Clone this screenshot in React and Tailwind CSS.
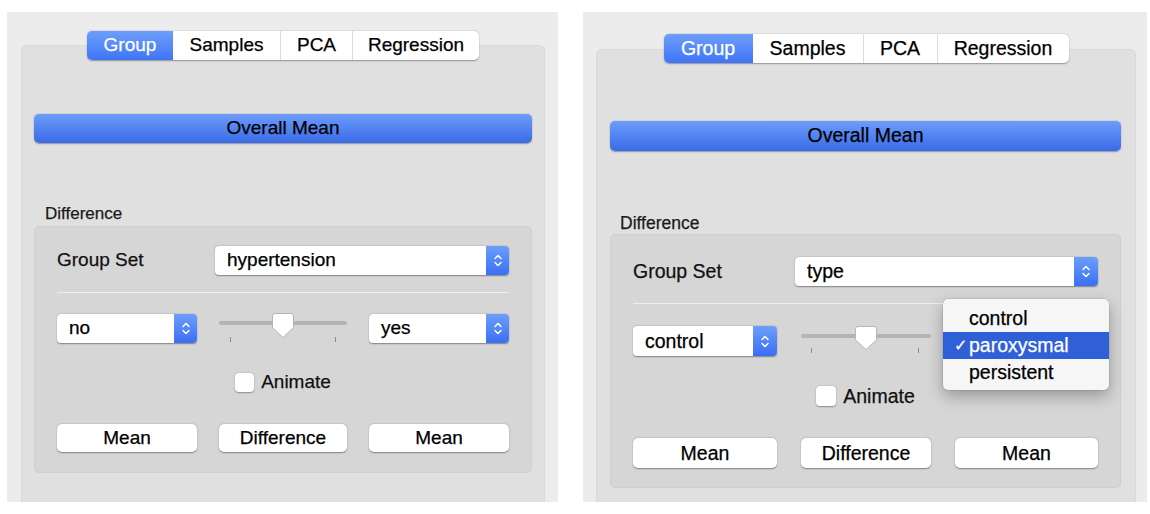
import React from "react";

const left = {
  win: "w-[551px] h-[490px] pt-[19px] pl-[14px] pr-[13px]",
  text: "text-[19px]",
  label: "text-[17px] mt-[61px] pl-[11px]",
  tabs: ["w-[86px]", "w-[107px]", "w-[72px]", "w-[127px]"],
  box: "-mt-[15px] pt-[68px] px-[12px]",
  overall: "h-[29px]",
  group: "mt-[2px] pt-[19px] pb-[20px] px-[22px]",
  setPopup: "w-[294px] h-[29px]",
  arrow: "w-[23px]",
  row: "mt-[21px] grid-cols-[140px_1fr_140px] gap-x-[22px]",
  popup: "h-[29px]",
  track: "mt-[7px]",
  ticks: "mt-[12px] pl-[11px] pr-[11px]",
  thumb: "-top-[1px] h-[25px]",
  check: "mt-[30px] h-[19px]",
  box19: "w-[19px] h-[19px]",
  buttons: "mt-[32px] grid-cols-[140px_1fr_140px] gap-x-[22px]",
  button: "h-[28px]",
};

const right = {
  win: "w-[564px] h-[490px] pt-[22px] pl-[13px] pr-[11px]",
  text: "text-[19.5px]",
  label: "text-[17.5px] mt-[62px] pl-[10px]",
  tabs: ["w-[89px]", "w-[110px]", "w-[74px]", "w-[132px]"],
  box: "-mt-[14px] pt-[71px] pl-[13px] pr-[14px]",
  overall: "h-[30px]",
  group: "mt-[1px] pt-[22px] pb-[19px] px-[22px]",
  setPopup: "w-[303px] h-[29px]",
  arrow: "w-[24px]",
  row: "mt-[22px] grid-cols-[144px_1fr_143px] gap-x-[24px]",
  popup: "h-[30px]",
  track: "mt-[8px]",
  ticks: "mt-[10px] pl-[10px] pr-[12px]",
  thumb: "top-0 h-[24px]",
  check: "mt-[30px] h-[20px]",
  box19: "w-[20px] h-[20px]",
  buttons: "mt-[32px] grid-cols-[144px_1fr_143px] gap-x-[24px]",
  button: "h-[30px]",
};

function Chevrons() {
  return (
    <svg width="10" height="17" viewBox="0 0 10 17" fill="none">
      <path d="M2 6.5 L5 3.5 L8 6.5" stroke="white" strokeWidth="1.5" strokeLinecap="round" strokeLinejoin="round" />
      <path d="M2 10.5 L5 13.5 L8 10.5" stroke="white" strokeWidth="1.5" strokeLinecap="round" strokeLinejoin="round" />
    </svg>
  );
}

function Popup({ value, size, arrow }) {
  return (
    <div className={`flex items-stretch rounded-[4px] bg-white shadow-[0_0.5px_1.5px_rgba(0,0,0,0.4)] ${size}`}>
      <span className="flex-1 flex items-center pl-[12px] text-black">{value}</span>
      <span className={`flex items-center justify-center rounded-r-[4px] bg-linear-to-b from-[#6d9dfb] to-[#3b6ef4] ${arrow}`}>
        <Chevrons />
      </span>
    </div>
  );
}

function Slider({ s }) {
  return (
    <div className="relative">
      <div className={`h-[4px] rounded-full bg-[#b4b4b4] ${s.track}`} />
      <div className={`flex justify-between ${s.ticks}`}>
        <span className="w-px h-[5px] bg-[#8a8a8a]" />
        <span className="w-px h-[5px] bg-[#8a8a8a]" />
      </div>
      <svg
        className={`absolute left-1/2 -translate-x-1/2 w-[22px] ${s.thumb}`}
        viewBox="0 0 22 25"
        preserveAspectRatio="none"
      >
        <path
          d="M3 0.5 H19 A2.5 2.5 0 0 1 21.5 3 V14.5 L11 24.5 L0.5 14.5 V3 A2.5 2.5 0 0 1 3 0.5 Z"
          fill="white"
          stroke="#b5b5b5"
          strokeWidth="1"
        />
      </svg>
    </div>
  );
}

function Button({ children, s }) {
  return (
    <button className={`flex items-center justify-center rounded-[5px] bg-white text-black shadow-[0_0.5px_1.5px_rgba(0,0,0,0.4)] ${s.button}`}>
      {children}
    </button>
  );
}

function Menu() {
  return (
    <div className="absolute left-[332px] top-[64px] w-[166px] h-[91px] pt-[6px] rounded-[5px] bg-[#f6f6f6] shadow-[0_6px_16px_rgba(0,0,0,0.3),0_0_0_0.5px_rgba(0,0,0,0.15)]">
      <div className="h-[27px] flex items-center pl-[26px] text-black">control</div>
      <div className="h-[27px] flex items-center pl-[11px] bg-[#3060d8] text-white">
        <span className="w-[15px] text-[16px] leading-none font-['DejaVu_Sans',sans-serif]">✓</span>
        <span>paroxysmal</span>
      </div>
      <div className="h-[27px] flex items-center pl-[26px] text-black">persistent</div>
    </div>
  );
}

function Panel({ s, setValue, lowValue, highValue, menu }) {
  const tabs = ["Group", "Samples", "PCA", "Regression"];
  return (
    <div className={`flex flex-col bg-[#ececec] ${s.win} ${s.text}`}>
      <div className="relative z-10 flex justify-center">
        <div className="flex h-[29px] rounded-[5px] bg-white shadow-[0_0.5px_1.5px_rgba(0,0,0,0.35)]">
          {tabs.map((t, i) => (
            <div
              key={t}
              className={`flex items-center justify-center ${s.tabs[i]} ${
                i === 0
                  ? "rounded-l-[5px] bg-linear-to-b from-[#6e9efb] to-[#4074f6] text-white"
                  : "text-black border-l border-[#dcdcdc]"
              } ${i === 1 ? "border-l-0" : ""}`}
            >
              {t}
            </div>
          ))}
        </div>
      </div>

      <div className={`flex-1 flex flex-col rounded-t-[6px] border border-b-0 border-[#d9d9d9] bg-[#e0e0e0] ${s.box}`}>
        <button className={`w-full rounded-[5px] bg-linear-to-b from-[#6d9cfa] to-[#3a6ae7] text-black shadow-[0_0.5px_1.5px_rgba(0,0,0,0.35)] ${s.overall}`}>
          Overall Mean
        </button>

        <div className={`leading-[20px] text-[#1a1a1a] ${s.label}`}>Difference</div>

        <div className={`relative rounded-[5px] border border-[#cfcfcf] bg-[#d6d6d6] ${s.group}`}>
          <div className="flex items-center">
            <span className="flex-1 text-[#111]">Group Set</span>
            <Popup value={setValue} size={s.setPopup} arrow={s.arrow} />
          </div>

          <div className="mt-[17px] h-px bg-[#efefef]" />

          <div className={`grid ${s.row}`}>
            <Popup value={lowValue} size={s.popup} arrow={s.arrow} />
            <Slider s={s} />
            <Popup value={highValue} size={s.popup} arrow={s.arrow} />
          </div>

          <div className={`flex items-center justify-center gap-[7px] ${s.check}`}>
            <span className={`rounded-[4px] bg-white shadow-[0_0.5px_1.5px_rgba(0,0,0,0.35)] ${s.box19}`} />
            <span className="text-[#111]">Animate</span>
          </div>

          <div className={`grid ${s.buttons}`}>
            <Button s={s}>Mean</Button>
            <Button s={s}>Difference</Button>
            <Button s={s}>Mean</Button>
          </div>

          {menu && <Menu />}
        </div>
      </div>
    </div>
  );
}

export default function App() {
  return (
    <div className="w-[1150px] h-[514px] bg-white flex gap-[25px] pt-[12px] pl-[7px] font-['Liberation_Sans',Arial,sans-serif] [-webkit-text-stroke:0.25px_currentColor] overflow-hidden">
      <Panel s={left} setValue="hypertension" lowValue="no" highValue="yes" />
      {/* the open menu covers the right popup, so its label stays empty */}
      <Panel s={right} setValue="type" lowValue="control" highValue="" menu />
    </div>
  );
}
